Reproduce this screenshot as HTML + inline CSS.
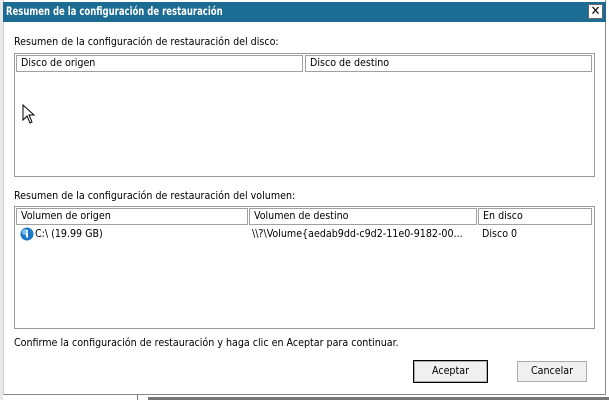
<!DOCTYPE html><html><head><style>
body{margin:0;width:609px;height:400px;background:#fff;position:relative;overflow:hidden;font-family:"DejaVu Sans Condensed","Liberation Sans",sans-serif;font-size:10.6px;color:#000}
.a{position:absolute;white-space:nowrap}
.hd{position:absolute;border:1px solid #a0a0a0;background:#fff;line-height:15px;padding-left:4px;box-sizing:border-box;height:17px;white-space:nowrap}
.btn{position:absolute;background:#f0f0f0;border:1px solid #adadad;text-align:center;box-sizing:border-box}
</style></head><body>
<div class="a" style="left:0;top:0;width:3px;height:400px;background:#e8e8e8"></div>
<div class="a" style="left:3px;top:0;width:603px;height:395px;border-right:1px solid #888;border-bottom:1px solid #888;border-left:1px solid #ccc;box-sizing:border-box;background:#fff"></div>
<div class="a" style="left:148px;top:397px;width:461px;height:3px;background:#777"></div>
<div class="a" style="left:137px;top:395px;width:1px;height:5px;background:#777"></div>
<div class="a" style="left:3px;top:2px;width:603px;height:20px;background:#1b6b93"></div>
<div class="a" style="left:6px;top:4px;color:#fff;font-weight:bold;font-size:11.5px;transform:scaleX(0.82);transform-origin:0 0">Resumen de la configuración de restauración</div>
<div class="a" style="left:588px;top:4px;width:15px;height:15px;background:#fff;border:1px solid #666;box-sizing:border-box;text-align:center;line-height:13px;font-size:13px;font-weight:bold">✕</div>
<div class="a" style="left:14px;top:36px">Resumen de la configuración de restauración del disco:</div>
<div class="a" style="left:14px;top:53px;width:581px;height:124px;border:1px solid #999;box-sizing:border-box"></div>
<div class="hd" style="left:16px;top:55px;width:287px">Disco de origen</div>
<div class="hd" style="left:305px;top:55px;width:287px">Disco de destino</div>
<svg class="a" style="left:22px;top:104px" width="14" height="20"><path d="M1 1 L1 16 L5 12 L8 19 L10 18 L7 11 L12 11 Z" fill="#fff" stroke="#000" stroke-width="1"/></svg>
<div class="a" style="left:14px;top:190px">Resumen de la configuración de restauración del volumen:</div>
<div class="a" style="left:14px;top:206px;width:581px;height:123px;border:1px solid #999;box-sizing:border-box"></div>
<div class="hd" style="left:16px;top:208px;width:232px">Volumen de origen</div>
<div class="hd" style="left:249px;top:208px;width:228px">Volumen de destino</div>
<div class="hd" style="left:478px;top:208px;width:114px">En disco</div>
<svg class="a" style="left:20px;top:227px" width="14" height="14"><circle cx="7" cy="7" r="6.5" fill="#1e78c8"/><circle cx="5" cy="5" r="3" fill="#7fc0f0"/><rect x="6" y="5.5" width="2" height="5" fill="#fff"/><rect x="6" y="3" width="2" height="1.6" fill="#fff"/></svg>
<div class="a" style="left:35px;top:228px">C:\ (19.99 GB)</div>
<div class="a" style="left:252px;top:228px">\\?\Volume{aedab9dd-c9d2-11e0-9182-00...</div>
<div class="a" style="left:482px;top:228px">Disco 0</div>
<div class="a" style="left:14px;top:337px">Confirme la configuración de restauración y haga clic en Aceptar para continuar.</div>
<div class="btn" style="left:413px;top:360px;width:75px;height:23px;border:1px solid #000;box-shadow:inset 0 0 0 1px #adadad;line-height:21px">Aceptar</div>
<div class="btn" style="left:517px;top:361px;width:70px;height:21px;line-height:19px">Cancelar</div>
</body></html>
